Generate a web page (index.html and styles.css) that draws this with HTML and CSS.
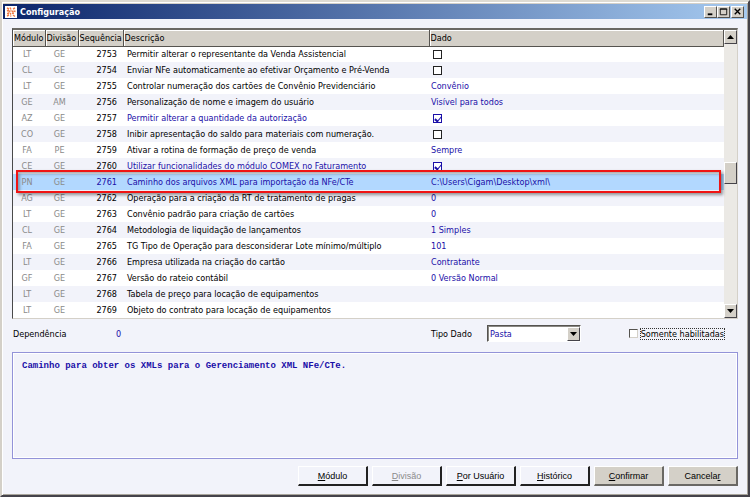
FILE: index.html
```html
<!DOCTYPE html>
<html lang="pt-BR">
<head>
	<meta charset="UTF-8">
	<meta name="viewport" content="width=device-width, initial-scale=1.0">
	<title>Configuração</title>
	<link rel="stylesheet" href="styles.css">
</head>
<body>
	<div class="window">
		<div class="titlebar">
			<svg class="logo" viewBox="0 0 12 12">
				<rect width="12" height="12" fill="#fff"/>
				<path d="M2 2l2 1M5 1.5l1 2M8 3l2-1M2 5l2-1M3.5 6.500l2-2M6.500 4.500l1.500 1.500M8.500 5l2 .5M2 7.500h2M5 7l1 1.500M7 7.500l2-.5M2 10l2-1M5.500 9.500l.5 1M8 9l2 1.500" stroke="#ee7a45" stroke-width="1.400" fill="none"/>
			</svg>
			<h1>Configuração</h1>
			<div class="controls">
				<button type="button" aria-label="Minimizar"><svg viewBox="0 0 12 10"><path d="M3 7.500h5" stroke="#000" stroke-width="2"/></svg></button>
				<button type="button" aria-label="Maximizar"><svg viewBox="0 0 12 10"><path d="M2.500 1.500h7v6.500h-7zM2 2h8" stroke="#111" fill="none"/></svg></button>
				<button type="button" class="close" aria-label="Fechar"><svg viewBox="0 0 12 10"><path d="M3 1.500l6 6M9 1.500l-6 6" stroke="#000" stroke-width="1.500"/></svg></button>
			</div>
		</div>

		<div class="content">
			<div class="list">
				<table class="grid">
					<colgroup>
						<col class="col-modulo">
						<col class="col-divisao">
						<col class="col-seq">
						<col class="col-desc">
						<col>
					</colgroup>
					<thead>
						<tr><th>Módulo</th><th>Divisão</th><th>Sequência</th><th>Descrição</th><th>Dado</th></tr>
					</thead>
					<tbody>
						<tr><td>LT</td><td>GE</td><td>2753</td><td>Permitir alterar o representante da Venda Assistencial</td><td><input type="checkbox" aria-label="2753"></td></tr>
						<tr><td>CL</td><td>GE</td><td>2754</td><td>Enviar NFe automaticamente ao efetivar Orçamento e Pré-Venda</td><td><input type="checkbox" aria-label="2754"></td></tr>
						<tr><td>LT</td><td>GE</td><td>2755</td><td>Controlar numeração dos cartões de Convênio Previdenciário</td><td>Convênio</td></tr>
						<tr><td>GE</td><td>AM</td><td>2756</td><td>Personalização de nome e imagem do usuário</td><td>Visível para todos</td></tr>
						<tr class="on"><td>AZ</td><td>GE</td><td>2757</td><td>Permitir alterar a quantidade da autorização</td><td><input type="checkbox" aria-label="2757" checked></td></tr>
						<tr><td>CO</td><td>GE</td><td>2758</td><td>Inibir apresentação do saldo para materiais com numeração.</td><td><input type="checkbox" aria-label="2758"></td></tr>
						<tr><td>FA</td><td>PE</td><td>2759</td><td>Ativar a rotina de formação de preço de venda</td><td>Sempre</td></tr>
						<tr class="on"><td>CE</td><td>GE</td><td>2760</td><td>Utilizar funcionalidades do módulo COMEX no Faturamento</td><td><input type="checkbox" aria-label="2760" checked></td></tr>
						<tr class="on selected"><td>PN<span class="marker"></span></td><td>GE</td><td>2761</td><td>Caminho dos arquivos XML para importação da NFe/CTe</td><td>C:\Users\Cigam\Desktop\xml\</td></tr>
						<tr><td>AG</td><td>GE</td><td>2762</td><td>Operação para a criação da RT de tratamento de pragas</td><td>0</td></tr>
						<tr><td>LT</td><td>GE</td><td>2763</td><td>Convênio padrão para criação de cartões</td><td>0</td></tr>
						<tr><td>CL</td><td>GE</td><td>2764</td><td>Metodologia de liquidação de lançamentos</td><td>1 Simples</td></tr>
						<tr><td>FA</td><td>GE</td><td>2765</td><td>TG Tipo de Operação para desconsiderar Lote mínimo/múltiplo</td><td>101</td></tr>
						<tr><td>LT</td><td>GE</td><td>2766</td><td>Empresa utilizada na criação do cartão</td><td>Contratante</td></tr>
						<tr><td>GF</td><td>GE</td><td>2767</td><td>Versão do rateio contábil</td><td>0 Versão Normal</td></tr>
						<tr><td>LT</td><td>GE</td><td>2768</td><td>Tabela de preço para locação de equipamentos</td><td></td></tr>
						<tr><td>LT</td><td>GE</td><td>2769</td><td>Objeto do contrato para locação de equipamentos</td><td></td></tr>
					</tbody>
				</table>
				<div class="scrollbar">
					<button type="button" aria-label="Subir"><svg viewBox="0 0 7 4"><path d="M0 4h7L3.500 0z"/></svg></button>
					<div class="track"><div class="thumb"></div></div>
					<button type="button" aria-label="Descer"><svg viewBox="0 0 7 4"><path d="M0 0h7L3.500 4z"/></svg></button>
				</div>
			</div>

			<div class="fields">
				<span>Dependência</span>
				<output class="value">0</output>
				<label for="tipo">Tipo Dado</label>
				<div class="combo">
					<select id="tipo"><option>Pasta</option></select>
					<span class="combo-arrow"><svg viewBox="0 0 7 4"><path d="M0 0h7L3.500 4z"/></svg></span>
				</div>
				<div class="only">
					<input type="checkbox" id="habilitadas">
					<label for="habilitadas">Somente habilitadas</label>
				</div>
			</div>

			<div class="help">Caminho para obter os XMLs para o Gerenciamento XML NFe/CTe.</div>

			<div class="buttons">
				<button type="button"><u>M</u>ódulo</button>
				<button type="button" disabled><u>D</u>ivisão</button>
				<button type="button"><u>P</u>or Usuário</button>
				<button type="button"><u>H</u>istórico</button>
				<button type="button" class="gray"><u>C</u>onfirmar</button>
				<button type="button" class="gray">Cancela<u>r</u></button>
			</div>
		</div>
	</div>
</body>
</html>
```

FILE: styles.css
```css
* {
	box-sizing: border-box;
	margin: 0;
	padding: 0;
}

body {
	font: 9px/12px "DejaVu Sans Condensed", "Noto Sans", sans-serif;
	color: #000;
}

button, select, input {
	font: inherit;
	color: inherit;
	appearance: none;
	border-radius: 0;
}

svg {
	display: block;
}

.window {
	display: flex;
	flex-direction: column;
	min-height: 100vh;
	padding: 1px;
	background: #f2f3fa;
	border: 2px solid;
	border-color: #dedbd3 #45434a #45434a #d4d0c8;
	box-shadow: inset 1px 1px #fff, inset -1px -1px #a9a59c;
}

.titlebar {
	display: flex;
	align-items: center;
	height: 16px;
	padding: 0 3px 0 2px;
	background: linear-gradient(to right, #0a246a, #a6caf0);
	border-top: 1px solid #d4d0c8;
}

.logo {
	width: 12px;
	height: 12px;
	margin-right: 3px;
}

.titlebar h1 {
	flex: 1;
	font-size: 9px;
	color: #fff;
}

.controls {
	display: flex;
}

.controls button {
	width: 13px;
	height: 12px;
	background: #d4d0c8;
	border: 1px solid;
	border-color: #fff #55534f #55534f #fff;
}

.controls svg {
	width: 11px;
	height: 10px;
}

.controls .close {
	margin-left: 1px;
}

.content {
	display: flex;
	flex: 1;
	flex-direction: column;
	padding: 9px 9px 8px;
}

.list {
	display: flex;
	border: 1px solid #d4d0c8;
	border-top: 2px solid #6a6864;
	border-left: 1px solid #4a4a4a;
}

.grid {
	width: 100%;
	table-layout: fixed;
	border-collapse: collapse;
	background: #fff;
}

.col-modulo {
	width: 32px;
}

.col-divisao {
	width: 33px;
}

.col-seq {
	width: 45px;
}

.col-desc {
	width: 306px;
}

.grid th {
	height: 16px;
	padding-left: 1px;
	font-weight: normal;
	text-align: left;
	white-space: nowrap;
	background: #d4d0c8;
	border-right: 1px solid #55534f;
	border-bottom: 1px solid #55534f;
	box-shadow: inset 1px 1px #fff;
}

.grid td {
	height: 16px;
	white-space: nowrap;
}

.grid tbody tr:nth-child(even) {
	background: #f2f3fa;
}

.grid td:nth-child(1),
.grid td:nth-child(2) {
	padding-right: 4px;
	color: #8a8a8a;
	text-align: center;
}

.grid td:nth-child(3) {
	padding-right: 6px;
	text-align: right;
}

.grid td:nth-child(4) {
	padding-left: 4px;
}

.grid td:nth-child(5) {
	padding-left: 2px;
	color: #1a0fa8;
}

.grid .on td:nth-child(4),
.grid .selected td:nth-child(3) {
	color: #1a0fa8;
}

.grid tbody .selected {
	position: relative;
	background: #b2d8ff;
}

/* red frame over the selected row */
.marker {
	position: absolute;
	top: -4px;
	right: 3px;
	bottom: -3px;
	left: 3px;
	border: 2px solid #f01414;
	box-shadow: 2px 2px 3px rgba(0, 0, 0, .4), inset 2px 2px 3px rgba(0, 0, 0, .3);
}

input[type="checkbox"] {
	display: block;
	width: 9px;
	height: 9px;
	background: #fff;
	border: 1px solid #222;
}

.grid input {
	margin-left: 2px;
}

.grid input:checked {
	position: relative;
	border-color: #1a0fa8;
}

.grid input:checked::after {
	content: "";
	position: absolute;
	top: 0;
	left: 2px;
	width: 3px;
	height: 5px;
	border: solid #1a0fa8;
	border-width: 0 1px 2px 0;
	transform: rotate(40deg);
}

.scrollbar {
	display: flex;
	flex: none;
	flex-direction: column;
	width: 13px;
	background: #ebe9e5;
}

.scrollbar button,
.thumb,
.combo-arrow {
	display: flex;
	align-items: center;
	justify-content: center;
	height: 14px;
	background: #d4d0c8;
	border: 1px solid;
	border-color: #fff #45434a #45434a #fff;
}

.scrollbar svg,
.combo-arrow svg {
	width: 7px;
	height: 4px;
}

.track {
	flex: 1;
	padding-top: 118px;
}

.thumb {
	height: 22px;
}

.fields {
	display: grid;
	grid-template-columns: 103px 315px 56px 94px 1fr;
	align-items: center;
	margin-top: 6px;
	padding-left: 1px;
}

.value {
	color: #1a0fa8;
}

.combo {
	position: relative;
	height: 17px;
	background: #fff;
	border: 1px solid;
	border-color: #55534f #fff #fff #55534f;
	box-shadow: inset 1px 1px #8a8883;
}

.combo select {
	display: block;
	width: 100%;
	height: 15px;
	padding-left: 2px;
	color: #1a0fa8;
	background: transparent;
	border: 0;
}

.combo-arrow {
	position: absolute;
	top: 1px;
	right: 0;
	width: 13px;
	pointer-events: none;
}

.only {
	display: flex;
	align-items: center;
	justify-content: flex-end;
	gap: 3px;
	padding-right: 14px;
	white-space: nowrap;
}

.only input {
	border-color: #55534f #d4d0c8 #d4d0c8 #55534f;
}

.only label {
	line-height: 10px;
	outline: 1px dotted #333;
}

.help {
	flex: 1;
	margin-top: 10px;
	padding: 7px 9px;
	font: bold 9px/12px "Liberation Mono", monospace;
	color: #1a0fa8;
	border: 1px solid #9393d8;
	box-shadow: inset -1px -1px #fff, inset 1px 1px #fff;
}

.buttons {
	display: flex;
	justify-content: flex-end;
	gap: 4px;
	margin-top: 7px;
}

.buttons button {
	width: 70px;
	height: 20px;
	font: 9px/12px "Liberation Sans", sans-serif;
	background: #f2f3fa;
	border: solid;
	border-width: 1px 2px 2px 1px;
	border-color: #fff #222 #222 #fff;
}

.buttons button:disabled {
	color: #8a8a8a;
}

.buttons .gray {
	background: #d4d0c8;
	border-color: #fff #6a6864 #6a6864 #fff;
}
```
